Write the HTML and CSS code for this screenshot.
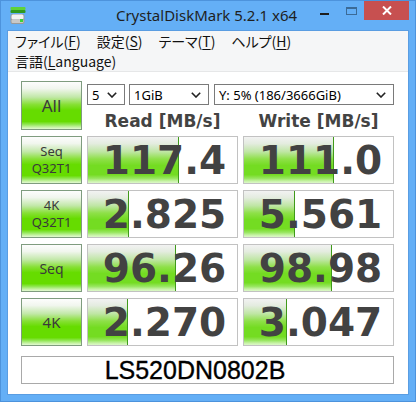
FILE: index.html
```html
<!DOCTYPE html>
<html lang="ja">
<head>
<meta charset="utf-8">
<title>CrystalDiskMark 5.2.1 x64</title>
<link rel="stylesheet" href="styles.css">
</head>
<body>
<div class="window">
  <div class="titlebar">
    <div class="tb-left">
      <svg class="app-icon" width="16" height="18" viewBox="0 0 16 18">
        <rect x="0.5" y="0" width="15" height="3" rx="1" fill="#5fd23a"/>
        <rect x="0.5" y="3" width="15" height="3" rx="1" fill="#2f9a1e"/>
        <rect x="0.5" y="7" width="14" height="10" rx="2" fill="#9a9a9a"/>
        <rect x="1.5" y="7.5" width="12" height="5" rx="1.5" fill="#f2f2f2"/>
        <rect x="1.5" y="12.5" width="12" height="3.5" rx="1" fill="#c8c8c8"/>
        <rect x="10" y="12" width="3" height="3" fill="#3bd23a"/>
      </svg>
    </div>
    <div class="title">CrystalDiskMark 5.2.1 x64</div>
    <div class="tb-right">
      <div class="wbtn min"><span class="min-bar"></span></div>
      <div class="wbtn max"><span class="max-box"></span></div>
      <div class="wbtn close">
        <svg width="10" height="9" viewBox="0 0 10 9"><path d="M1 0.5 L9 8.5 M9 0.5 L1 8.5" stroke="#fff" stroke-width="2"/></svg>
      </div>
    </div>
  </div>
  <div class="client">
    <div class="menubar">
      <div class="menu-row">
        <span class="mi">ファイル(<u>F</u>)</span>
        <span class="mi">設定(<u>S</u>)</span>
        <span class="mi">テーマ(<u>T</u>)</span>
        <span class="mi">ヘルプ(<u>H</u>)</span>
      </div>
      <div class="menu-row">
        <span class="mi">言語(<u>L</u>anguage)</span>
      </div>
    </div>
    <div class="main">
      <div class="grid">
        <div class="btn btn-all">All</div>
        <div class="controls">
          <div class="selects">
            <div class="sel sel-count"><span>5</span><svg width="10" height="6" viewBox="0 0 10 6"><path d="M0.8 0.8 L5 5 L9.2 0.8" fill="none" stroke="#222" stroke-width="1.6"/></svg></div>
            <div class="sel sel-size"><span>1GiB</span><svg width="10" height="6" viewBox="0 0 10 6"><path d="M0.8 0.8 L5 5 L9.2 0.8" fill="none" stroke="#222" stroke-width="1.6"/></svg></div>
            <div class="sel sel-drive"><span>Y: 5% (186/3666GiB)</span><svg width="10" height="6" viewBox="0 0 10 6"><path d="M0.8 0.8 L5 5 L9.2 0.8" fill="none" stroke="#222" stroke-width="1.6"/></svg></div>
          </div>
          <div class="heads">
            <div class="head">Read [MB/s]</div>
            <div class="head">Write [MB/s]</div>
          </div>
        </div>

        <div class="btn btn-two"><span>Seq</span><span>Q32T1</span></div>
        <div class="cell"><div class="bar" style="width:91px"></div><span class="num">117.4</span></div>
        <div class="cell"><div class="bar" style="width:90px"></div><span class="num">111.0</span></div>

        <div class="btn btn-two"><span>4K</span><span>Q32T1</span></div>
        <div class="cell"><div class="bar" style="width:41px"></div><span class="num">2.825</span></div>
        <div class="cell"><div class="bar" style="width:51px"></div><span class="num">5.561</span></div>

        <div class="btn btn-seq">Seq</div>
        <div class="cell"><div class="bar" style="width:88px"></div><span class="num">96.26</span></div>
        <div class="cell"><div class="bar" style="width:88px"></div><span class="num">98.98</span></div>

        <div class="btn btn-4k">4K</div>
        <div class="cell"><div class="bar" style="width:40px"></div><span class="num">2.270</span></div>
        <div class="cell"><div class="bar" style="width:43px"></div><span class="num">3.047</span></div>
      </div>
      <div class="name">LS520DN0802B</div>
    </div>
  </div>
</div>
</body>
</html>
```
FILE: styles.css
```css
* { box-sizing: border-box; }
html, body { margin: 0; padding: 0; background: #62aef5; }

.window {
  width: 416px;
  height: 402px;
  background: #64aff6;
  border: 1px solid #4d93dc;
  display: flex;
  flex-direction: column;
}

.titlebar {
  height: 29px;
  display: grid;
  grid-template-columns: 1fr auto 1fr;
  align-items: start;
  flex: none;
}
.tb-left { padding: 6px 0 0 9px; }
.app-icon { display: block; }
.title {
  font-family: "Noto Sans", "Open Sans", sans-serif;
  font-size: 15px;
  line-height: 28px;
  color: #1f1f1f;
  white-space: nowrap;
  padding-right: 3px;
}
.tb-right {
  display: flex;
  justify-content: flex-end;
  align-items: flex-start;
  padding-right: 6px;
}
.wbtn { height: 19px; display: flex; align-items: flex-start; }
.min { width: 26px; justify-content: flex-start; }
.min-bar { display: block; width: 9px; height: 2px; background: #1d1d1d; margin-top: 12px; }
.max { width: 18px; }
.max-box {
  display: block; width: 11px; height: 8px;
  border: 1px solid #3b6a96; border-top-width: 2px;
  margin-top: 6px;
}
.close {
  width: 45px;
  height: 19px;
  background: #c75050;
  justify-content: center;
  align-items: center;
}
.close svg { display: block; }

.client {
  margin: 0 6px;
  border: 1px solid #5a9de2;
  background: #fff;
  height: 365px;
  flex: none;
}

.menubar {
  background: #f5f6f7;
  height: 41px;
  padding: 1px 0 0 7px;
  border-bottom: 1px solid #e6e7e8;
  font-family: "Noto Sans CJK JP", "Noto Sans", sans-serif;
  font-size: 14px;
  color: #111;
  font-feature-settings: "palt";
}
.menu-row { display: flex; gap: 16px; height: 19.5px; line-height: 19px; }
.mi { white-space: nowrap; }
.mi u { text-underline-offset: 2px; }

.main { padding: 9px 14px 0 13px; }
.grid {
  display: grid;
  grid-template-columns: 61px 151px 151px;
  grid-template-rows: 49px 48px 48px 48px 48px;
  column-gap: 5px;
  row-gap: 6px;
}

.btn {
  border: 1px solid #7f9c7f;
  background: linear-gradient(to bottom, #fdfdfd 0%, #f1f6ee 14%, #c2e8a8 32%, #86e034 48%, #66dc00 60%, #66dc00 84%, #8ee650 90%, #c6f2a4 96%, #e2fad2 100%);
  color: #3a3a3a;
  font-family: "Noto Sans", "Open Sans", sans-serif;
  display: flex;
  flex-direction: column;
  align-items: center;
  justify-content: center;
}
.btn-all { font-size: 17px; }
.btn-two { font-size: 13px; line-height: 17px; }
.btn-seq { font-size: 14px; }
.btn-4k { font-size: 15px; }

.controls {
  grid-column: 2 / 4;
  display: flex;
  flex-direction: column;
}
.selects { display: flex; margin-top: 3px; height: 21px; }
.sel {
  height: 21px;
  border: 1px solid #7a7a7a;
  background: #fff;
  display: flex;
  align-items: center;
  justify-content: space-between;
  padding: 0 7px 0 4px;
  font-family: "Noto Sans", "Open Sans", sans-serif;
  font-size: 13px;
  color: #000;
}
.sel svg { display: block; }
.sel-count { width: 38px; margin-right: 4px; }
.sel-size { width: 80px; margin-right: 5px; }
.sel-drive { width: 180px; }

.heads {
  display: grid;
  grid-template-columns: 151px 151px;
  column-gap: 5px;
  flex: 1;
  align-items: center;
  padding-top: 6px;
}
.head {
  text-align: center;
  font-family: "DejaVu Sans", sans-serif;
  font-weight: bold;
  font-size: 17px;
  color: #434343;
}

.cell {
  position: relative;
  border: 1px solid #c2c2c2;
  background: #fff;
  display: flex;
  align-items: center;
  justify-content: center;
  padding-left: 4px;
}
.bar {
  position: absolute;
  left: 0; top: 0; bottom: 0;
  background: linear-gradient(to bottom, #f2f2f2 0%, #e4ece0 14%, #bfe6a4 32%, #8ee048 48%, #74dc22 62%, #74dc22 82%, #98e660 90%, #c8f2a8 96%, #dcf8c8 100%);
  border-right: 1px solid #3f9a1a;
}
.num {
  position: relative;
  font-family: "DejaVu Sans", sans-serif;
  font-weight: bold;
  font-size: 39px;
  color: #424242;
  line-height: 1;
}

.name {
  margin-top: 10px;
  height: 28px;
  border: 1px solid #a9a9a9;
  background: #fff;
  text-align: center;
  padding-right: 25px;
  font-family: "Liberation Sans", Arial, sans-serif;
  font-size: 25px;
  line-height: 26px;
  color: #000;
  -webkit-text-stroke: 0.35px #000;
}
```
